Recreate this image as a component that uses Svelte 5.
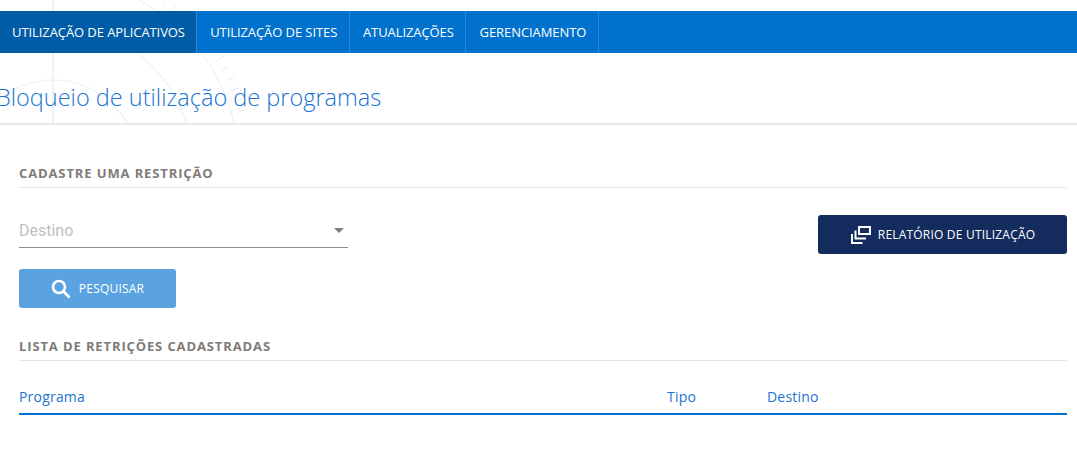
<script>
  const tabs = [
    { label: 'UTILIZAÇÃO DE APLICATIVOS', active: true },
    { label: 'UTILIZAÇÃO DE SITES' },
    { label: 'ATUALIZAÇÕES' },
    { label: 'GERENCIAMENTO' }
  ];
  const cx = 53;
  const cy = 165;
  const ticks = Array.from({ length: 14 }, (_, i) => {
    const a = ((16 + i * 3.3) * Math.PI) / 180;
    return {
      x1: cx + 193 * Math.cos(a),
      y1: cy - 193 * Math.sin(a),
      x2: cx + 202 * Math.cos(a),
      y2: cy - 202 * Math.sin(a)
    };
  });
</script>

<div class="page">
  <svg class="watermark" width="300" height="125" viewBox="0 0 300 125" fill="none" stroke="#e4eff9" aria-hidden="true">
    <line x1={cx} y1="0" x2={cx} y2="125" stroke-width="1.5" />
    <circle {cx} {cy} r="85" stroke="#edf4fb" stroke-width="1.5" />
    <circle {cx} {cy} r="140" />
    <circle {cx} {cy} r="186" />
    {#each ticks as t}
      <line x1={t.x1} y1={t.y1} x2={t.x2} y2={t.y2} />
    {/each}
  </svg>
  <nav class="tabs">
    {#each tabs as tab}
      <a class="tab" class:active={tab.active} href="#top">{tab.label}</a>
    {/each}
  </nav>
  <header class="title-bar">
    <h1>Bloqueio de utilização de programas</h1>
  </header>
  <main class="content">
    <h2>CADASTRE UMA RESTRIÇÃO</h2>
    <div class="form-row">
      <div class="select">
        <span>Destino</span>
        <i class="caret"></i>
      </div>
      <button class="report" type="button">
        <svg width="22" height="20" viewBox="0 0 22 20" fill="none" stroke="#fff" stroke-width="2" aria-hidden="true">
          <rect x="9" y="2" width="11" height="7" />
          <path d="M5.5 5.5v8h10.5" />
          <path d="M2 9v9h10.5" />
        </svg>
        RELATÓRIO DE UTILIZAÇÃO
      </button>
    </div>
    <button class="search" type="button">
      <svg width="20" height="20" viewBox="0 0 20 20" fill="none" stroke="#fff" stroke-width="2.6" aria-hidden="true">
        <circle cx="8" cy="8" r="6" />
        <path d="M12.5 12.5l6 6" />
      </svg>
      PESQUISAR
    </button>
    <h2 class="list-heading">LISTA DE RETRIÇÕES CADASTRADAS</h2>
    <div class="table-head">
      <span class="col-program">Programa</span>
      <span class="col-type">Tipo</span>
      <span>Destino</span>
    </div>
  </main>
</div>

<style>
  :global(body) {
    margin: 0;
    background: #fff;
    font-family: "Open Sans", sans-serif;
  }
  .page {
    position: relative;
    height: 456px;
    overflow: hidden;
    padding-top: 11px;
    box-sizing: border-box;
  }
  .watermark {
    position: absolute;
    left: 0;
    top: 0;
  }
  .tabs {
    position: relative;
    display: flex;
    height: 42px;
    background: #0072ce;
  }
  .tab {
    display: flex;
    align-items: center;
    padding: 0 11.5px 0 13.25px;
    border-right: 1px solid #2a88d6;
    color: #fff;
    font-size: 13px;
    letter-spacing: -0.08px;
    text-decoration: none;
  }
  .tab.active {
    padding: 0 11px 0 12px;
    background: #005ca6;
  }
  .title-bar {
    position: relative;
    height: 72px;
    box-sizing: border-box;
    border-bottom: 2px solid #e8e8e8;
  }
  h1 {
    margin: 0 0 0 -4px;
    padding-top: 27px;
    font-size: 23.5px;
    font-weight: 300;
    line-height: 34px;
    color: #1c74d2;
    white-space: nowrap;
  }
  .content {
    position: relative;
    padding: 0 10px 0 19px;
  }
  h2 {
    margin: 39px 0 0;
    padding-bottom: 5px;
    border-bottom: 1px solid #e4e4e4;
    font-size: 13px;
    font-weight: 700;
    line-height: 18px;
    letter-spacing: 0.88px;
    color: #7f7b78;
  }
  .form-row {
    display: flex;
    justify-content: space-between;
    align-items: flex-start;
    margin-top: 27px;
  }
  .select {
    display: flex;
    justify-content: space-between;
    align-items: center;
    box-sizing: border-box;
    width: 329px;
    height: 33px;
    padding-bottom: 2px;
    border-bottom: 1px solid #8c8c8c;
    font-family: Roboto, sans-serif;
    font-size: 16px;
    color: #c0c0c0;
  }
  .caret {
    width: 0;
    height: 0;
    margin-right: 4px;
    border: 5px solid transparent;
    border-top: 5px solid #7d7d7d;
    border-bottom: 0;
  }
  button {
    display: flex;
    align-items: center;
    justify-content: center;
    border: 0;
    border-radius: 3px;
    color: #fff;
    font-family: "Open Sans", sans-serif;
    font-size: 12px;
    letter-spacing: 0.2px;
  }
  .report {
    gap: 6px;
    width: 249px;
    height: 39px;
    background: #132c5d;
  }
  .search {
    gap: 8px;
    width: 157px;
    height: 39px;
    margin-top: 15px;
    background: #5aa3e0;
  }
  .list-heading {
    margin-top: 29px;
  }
  .table-head {
    display: flex;
    align-items: center;
    height: 54px;
    padding-top: 18px;
    box-sizing: border-box;
    border-bottom: 2px solid #0072ce;
    font-size: 14px;
    letter-spacing: 0.2px;
    color: #1c74d2;
  }
  .col-program {
    width: 648px;
  }
  .col-type {
    width: 100px;
  }
</style>
